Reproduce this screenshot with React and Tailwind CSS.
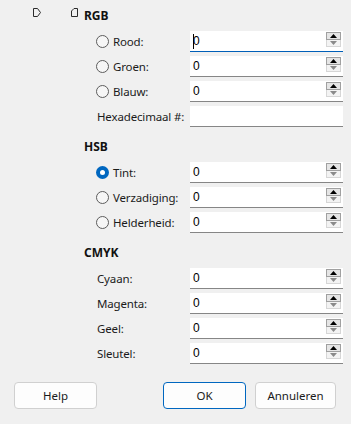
import React from "react";

const font = { fontFamily: '"Noto Sans", "Open Sans", sans-serif' };

const Radio = ({ checked }) =>
  checked ? (
    <span className="w-[13px] h-[13px] rounded-full bg-[#0067c0] flex items-center justify-center shrink-0">
      <span className="w-[5px] h-[5px] rounded-full bg-white" />
    </span>
  ) : (
    <span className="w-[13px] h-[13px] rounded-full border border-[#5c5c5c] bg-[#f6f6f6] shrink-0" />
  );

const Spinner = () => (
  <div className="absolute right-[2px] top-[1px] w-[15px] flex flex-col">
    <div className="h-[8px] border border-[#a0a0a0] bg-[#e5e5e5] flex items-center justify-center">
      <svg width="7" height="4" viewBox="0 0 7 4">
        <path d="M0 4 L3.5 0 L7 4 Z" fill="#000" />
      </svg>
    </div>
    <div className="h-[7px] border border-t-0 border-[#d6d6d6] bg-[#f3f3f3] flex items-center justify-center">
      <svg width="7" height="4" viewBox="0 0 7 4">
        <path d="M0 0 L7 0 L3.5 4 Z" fill="#8a8a8a" />
      </svg>
    </div>
  </div>
);

const Field = ({ value, focused, spinner = true }) => (
  <div
    className={`relative w-[153px] h-[21px] bg-white border-b ${
      focused ? "border-[#005fb8]" : "border-[#868686]"
    } flex items-center pl-[3px]`}
  >
    {focused && <span className="w-px h-[15px] bg-black -mr-px z-10" />}
    <span
      className="text-[12px] text-black leading-none"
      style={{ fontFamily: '"Liberation Sans", Arial, sans-serif' }}
    >
      {value}
    </span>
    {spinner && <Spinner />}
  </div>
);

const Row = ({ label, radio, checked, value = "0", focused, spinner }) => (
  <div className="flex items-center h-[21px]">
    <div className="w-[106px] flex items-center whitespace-nowrap tracking-[-0.15px]">
      {radio ? (
        <div className="pl-[12px] flex items-center gap-[4px]">
          <Radio checked={checked} />
          <span className="text-[11.5px] text-[#1b1b1b] leading-none">{label}</span>
        </div>
      ) : (
        <span className="pl-[13px] text-[11.5px] text-[#1b1b1b] leading-none">{label}</span>
      )}
    </div>
    <Field value={value} focused={focused} spinner={spinner} />
  </div>
);

const Section = ({ title, children, first }) => (
  <div className={first ? "" : "mt-[12px]"}>
    <div className="h-[16px] flex items-center text-[12px] font-bold text-[#111] leading-none">
      {title}
    </div>
    <div className="mt-[7px] flex flex-col gap-[4px]">{children}</div>
  </div>
);

const Button = ({ children, primary, w }) => (
  <button
    className={`${w} h-[27px] rounded-[4px] bg-[#fdfdfd] border ${
      primary ? "border-[#0067c0]" : "border-[#d0d0d0]"
    } text-[11.5px] text-[#1b1b1b]`}
  >
    {children}
  </button>
);

export default function App() {
  return (
    <div className="w-[351px] h-[424px] bg-[#f0f0f0] flex flex-col" style={font}>
      <div className="flex">
        {/* Slider markers */}
        <div className="w-[84px] pt-[8px] pl-[33px] flex items-start gap-[30px]">
          <svg width="8" height="9" viewBox="0 0 8 9">
            <path d="M0.5 0.5 H4.5 L7.5 4.5 L4.5 8.5 H0.5 Z" fill="none" stroke="#2b2b2b" />
          </svg>
          <svg width="7" height="9" viewBox="0 0 7 9">
            <path d="M6.5 0.5 H3 L0.5 3 V8.5 H6.5 Z" fill="none" stroke="#2b2b2b" />
          </svg>
        </div>

        <div className="flex-1 pt-[8px]">
          <Section title="RGB" first>
            <Row label="Rood:" radio focused />
            <Row label="Groen:" radio />
            <Row label="Blauw:" radio />
            <Row label="Hexadecimaal #:" value="" spinner={false} />
          </Section>
          <Section title="HSB">
            <Row label="Tint:" radio checked />
            <Row label="Verzadiging:" radio />
            <Row label="Helderheid:" radio />
          </Section>
          <Section title="CMYK">
            <Row label="Cyaan:" />
            <Row label="Magenta:" />
            <Row label="Geel:" />
            <Row label="Sleutel:" />
          </Section>
        </div>
      </div>

      <div className="mt-[18px] flex items-center pl-[14px] pr-[15px]">
        <Button w="w-[83px]">Help</Button>
        <div className="flex-1" />
        <Button w="w-[83px]" primary>
          OK
        </Button>
        <div className="w-[9px]" />
        <Button w="w-[81px]">Annuleren</Button>
      </div>
    </div>
  );
}
